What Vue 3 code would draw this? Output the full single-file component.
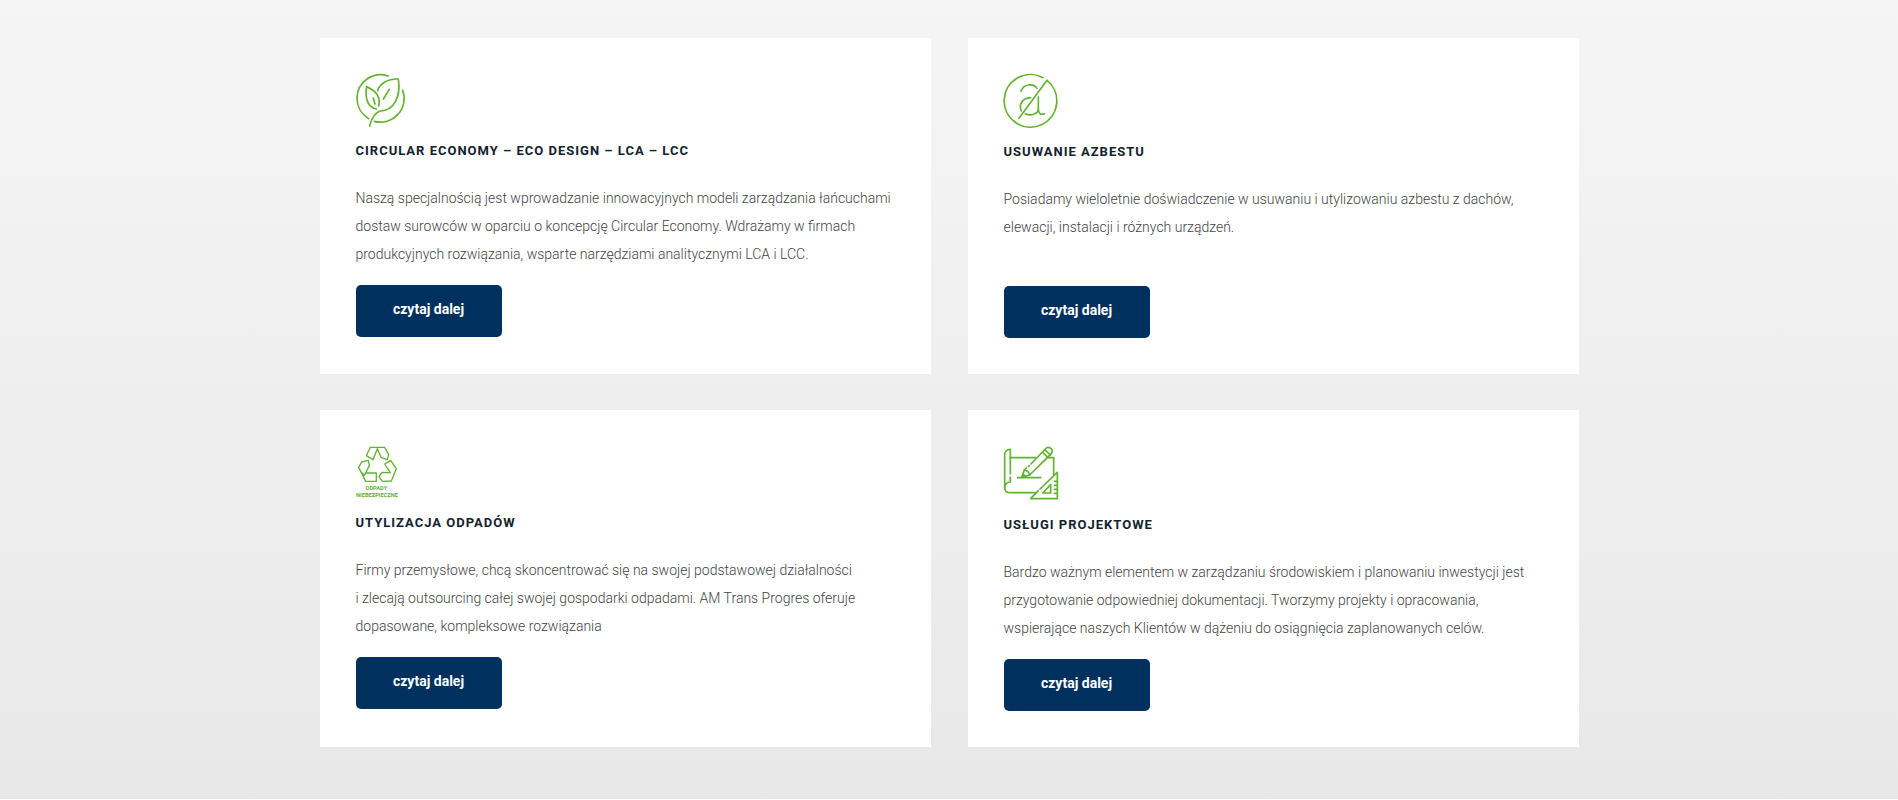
<template>
  <section class="services">
    <div class="services-grid">
      <article v-for="service in services" :key="service.id" class="card">
        <svg v-if="service.id === 'eco'" class="icon icon-eco" viewBox="33 27 147 159" aria-hidden="true">
          <path d="M71 161 A71 71 0 0 1 36 99 A71 71 0 0 1 130 33" />
          <path d="M173 76 A71 71 0 0 1 88 169" />
          <path d="M74 183 C79 159 93 141 106 138 C148 136 168 95 160 42 C129 41 104 55 98 77" />
          <path d="M65 65 C59 98 68 127 94 132" />
          <path d="M65 65 C91 76 108 95 101 123" />
          <path d="M85 99 L90 117" />
          <path d="M133 73 L115 102" />
        </svg>
        <svg v-else-if="service.id === 'asbestos'" class="icon icon-asbestos" viewBox="27 27 162 162" aria-hidden="true">
          <path d="M144 38 A79 79 0 1 0 156 46" />
          <path d="M156 46 L72 160" />
          <path d="M78 79 C85 55 117 55 126 70" />
          <path d="M107 98 C80 100 71 119 79 138" />
          <path d="M91 146 C105 154 130 147 130 132 L130 96" />
          <path d="M130 132 C130 147 138 150 148 146" />
        </svg>
        <svg v-else-if="service.id === 'waste'" class="icon icon-waste" viewBox="33 24 126 159" aria-hidden="true">
          <path d="M84 65 L64 53 L76 28 L119 28 L131 50 L127 65 L109 59 L97 32 L84 65" />
          <path d="M51 105 L58 112 L73 83 L70 67 L50 72 L41 88 L62 130 L94 130 L94 105 L62 105" />
          <path d="M119 78 L137 67 L154 92 L139 129 L112 130 L102 116 L111 103 L136 104 Z" />
          <text x="94" y="157" class="icon-label">ODPADY</text>
          <text x="96" y="178" class="icon-label">NIEBEZPIECZNE</text>
        </svg>
        <svg v-else class="icon icon-project" viewBox="27 24 162 165" aria-hidden="true">
          <path d="M46 107 L46 34 C35 34 29 42 29 51 L29 149 C29 159 36 164 46 164 L122 164" />
          <path d="M46 117 L46 132 C36 132 30 139 29 149" />
          <path d="M46 59 L121 59" />
          <path d="M160 59 L176 59 L176 110" />
          <path d="M68 119 L137 119" />
          <path d="M100 86 L103 83 M108 78 L151 33 C161 22 178 35 169 47 L104 111 L81 118 L88 96 L94 90" />
          <path d="M88 96 Q100 97 104 111 M142 42 L159 59 M149 35 L166 51" />
          <path d="M81 118 L84 108 L91 115 Z" class="icon-fill" />
          <path d="M135 153 L187 103 L187 182 L107 182 L130 158" />
          <path d="M167 140 L167 165 L143 165 Z" />
          <path d="M178 130 H187 M178 142 H187 M178 154 H187 M178 166 H187" />
        </svg>
        <h3 class="card-title">{{ service.title }}</h3>
        <p class="card-text">
          <span v-for="line in service.lines" :key="line" class="card-line">{{ line }} </span>
        </p>
        <a href="#" class="card-button" :aria-label="`czytaj dalej: ${service.title}`">czytaj dalej</a>
      </article>
    </div>
  </section>
</template>

<script setup>
const services = [
  {
    id: 'eco',
    title: 'CIRCULAR ECONOMY – ECO DESIGN – LCA – LCC',
    lines: [
      'Naszą specjalnością jest wprowadzanie innowacyjnych modeli zarządzania łańcuchami',
      'dostaw surowców w oparciu o koncepcję Circular Economy. Wdrażamy w firmach',
      'produkcyjnych rozwiązania, wsparte narzędziami analitycznymi LCA i LCC.'
    ]
  },
  {
    id: 'asbestos',
    title: 'USUWANIE AZBESTU',
    lines: [
      'Posiadamy wieloletnie doświadczenie w usuwaniu i utylizowaniu azbestu z dachów,',
      'elewacji, instalacji i różnych urządzeń.'
    ]
  },
  {
    id: 'waste',
    title: 'UTYLIZACJA ODPADÓW',
    lines: [
      'Firmy przemysłowe, chcą skoncentrować się na swojej podstawowej działalności',
      'i zlecają outsourcing całej swojej gospodarki odpadami. AM Trans Progres oferuje',
      'dopasowane, kompleksowe rozwiązania'
    ]
  },
  {
    id: 'project',
    title: 'USŁUGI PROJEKTOWE',
    lines: [
      'Bardzo ważnym elementem w zarządzaniu środowiskiem i planowaniu inwestycji jest',
      'przygotowanie odpowiedniej dokumentacji. Tworzymy projekty i opracowania,',
      'wspierające naszych Klientów w dążeniu do osiągnięcia zaplanowanych celów.'
    ]
  }
]
</script>

<style>
body {
  margin: 0;
  background-color: #ffffff;
}
</style>

<style scoped>
.services {
  box-sizing: border-box;
  padding: 38px 24px 52px;
  background: linear-gradient(180deg, #f5f5f5 0%, #e8e8e8 100%);
  font-family: Roboto, "Liberation Sans", sans-serif;
}

.services-grid {
  display: grid;
  grid-template-columns: repeat(2, minmax(0, 1fr));
  column-gap: 37px;
  row-gap: 36px;
  max-width: 1259px;
  margin: 0 auto;
}

.card {
  display: flex;
  flex-direction: column;
  align-items: flex-start;
  padding: 36px 24px 36px 36px;
  background-color: #ffffff;
}

.icon {
  display: block;
  margin-bottom: 14px;
  overflow: visible;
  fill: none;
  stroke: #62b32e;
  stroke-width: 5;
  stroke-linecap: round;
  stroke-linejoin: round;
}

.icon-eco {
  width: 49px;
  height: 53px;
}

.icon-asbestos {
  width: 54px;
  height: 54px;
}

.icon-waste {
  width: 42px;
  height: 53px;
  stroke-width: 4;
}

.icon-project {
  width: 54px;
  height: 55px;
}

.icon-fill {
  fill: #62b32e;
}

.icon-label {
  fill: #62b32e;
  stroke: none;
  font-size: 17px;
  font-weight: 700;
  text-anchor: middle;
}

.card-title {
  margin: 0 0 23px;
  color: #12222e;
  font-size: 13px;
  font-weight: 700;
  line-height: 20px;
  letter-spacing: 1px;
}

.card-text {
  min-height: 84px;
  margin: 0 0 17px;
  color: #444444;
  font-size: 14px;
  font-weight: 300;
  line-height: 28px;
}

.card-line {
  display: block;
}

.card-button {
  box-sizing: border-box;
  min-width: 146px;
  padding: 14px 34px 18px;
  border-radius: 5px;
  background-color: #00315e;
  color: #ffffff;
  font-size: 14px;
  font-weight: 700;
  line-height: 20px;
  text-align: center;
  text-decoration: none;
}

.card-button:hover {
  background-color: #62b32e;
}

@media (max-width: 900px) {
  .services-grid {
    grid-template-columns: 1fr;
  }
}
</style>
